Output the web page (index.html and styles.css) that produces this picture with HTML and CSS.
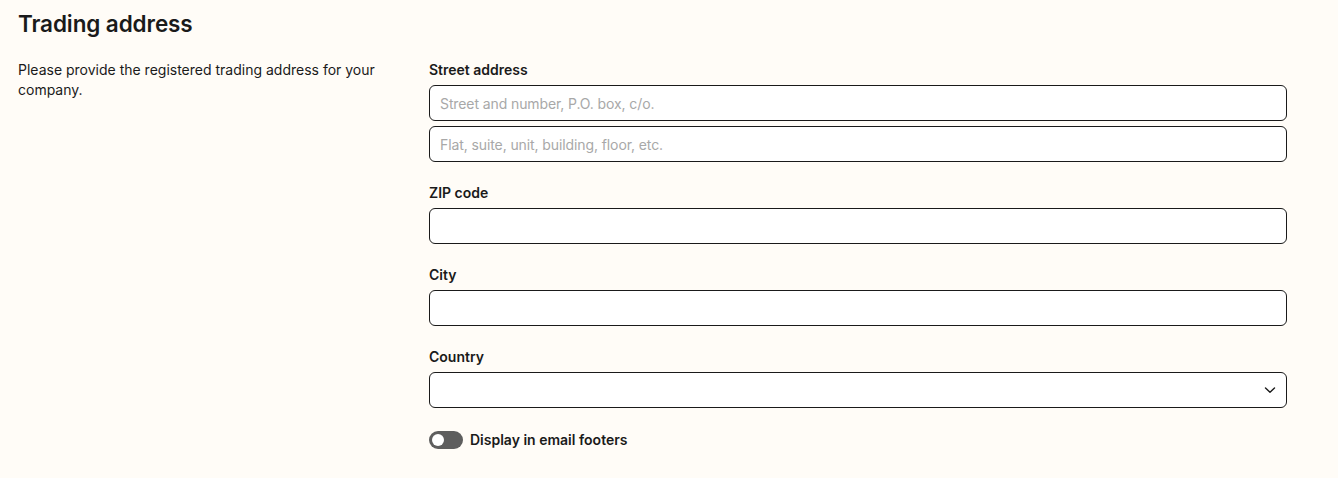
FILE: index.html
```html
<!DOCTYPE html>
<html lang="en">
<head>
    <meta charset="UTF-8">
    <meta name="viewport" content="width=device-width, initial-scale=1.0">
    <title>Trading address</title>
    <link rel="stylesheet" href="styles.css">
</head>
<body>
    <div class="page">
        <h1>Trading address</h1>

        <div class="section">
            <p class="intro">Please provide the registered trading address for your company.</p>

            <form class="form">
                <div class="field">
                    <label class="label">Street address</label>
                    <input class="input" type="text" placeholder="Street and number, P.O. box, c/o.">
                    <input class="input" type="text" placeholder="Flat, suite, unit, building, floor, etc.">
                </div>

                <div class="field">
                    <label class="label">ZIP code</label>
                    <input class="input" type="text">
                </div>

                <div class="field">
                    <label class="label">City</label>
                    <input class="input" type="text">
                </div>

                <div class="field">
                    <label class="label">Country</label>
                    <div class="select">
                        <svg class="chevron" width="12" height="8" viewBox="0 0 12 8">
                            <path d="M1.5 2l4.5 4.2L10.5 2" fill="none" stroke="#1a1a1a" stroke-width="1.4" stroke-linecap="round" stroke-linejoin="round"/>
                        </svg>
                    </div>
                </div>

                <div class="toggle-row">
                    <span class="toggle"><span class="knob"></span></span>
                    <span class="toggle-label">Display in email footers</span>
                </div>
            </form>
        </div>
    </div>
</body>
</html>
```

FILE: styles.css
```css
* {
    margin: 0;
    padding: 0;
    box-sizing: border-box;
    font-family: 'Inter', 'Liberation Sans', sans-serif;
}

body {
    background-color: #fffcf7;
    color: #1a1a1a;
}

.page {
    padding: 10px 18px 0 18px;
}

h1 {
    font-size: 22.5px;
    font-weight: 600;
    line-height: 28px;
    letter-spacing: -0.1px;
    margin-bottom: 22px;
}

.section {
    display: grid;
    grid-template-columns: 411px 858px;
}

.intro {
    font-size: 14px;
    line-height: 20px;
    padding-right: 30px;
}

.form {
    display: flex;
    flex-direction: column;
    gap: 21px;
}

.field {
    display: flex;
    flex-direction: column;
    gap: 5px;
}

.label {
    font-size: 14px;
    font-weight: 600;
    line-height: 20px;
}

.input,
.select {
    width: 100%;
    height: 36px;
    background-color: white;
    border: 1px solid #1a1a1a;
    border-radius: 6px;
    padding: 0 10px;
    font-size: 14px;
    color: #1a1a1a;
}

.input::placeholder {
    color: #a8a8a8;
    letter-spacing: -0.1px;
}

.select {
    display: flex;
    align-items: center;
    justify-content: flex-end;
    padding-right: 10px;
}

.toggle-row {
    display: flex;
    align-items: center;
    gap: 7px;
    margin-top: 1px;
}

.toggle {
    width: 34px;
    height: 18px;
    border-radius: 9px;
    background-color: #5e5e5e;
    display: flex;
    align-items: center;
    padding-left: 3px;
}

.knob {
    width: 12px;
    height: 12px;
    border-radius: 50%;
    background-color: white;
}

.toggle-label {
    font-size: 14px;
    font-weight: 600;
    line-height: 20px;
}
```
